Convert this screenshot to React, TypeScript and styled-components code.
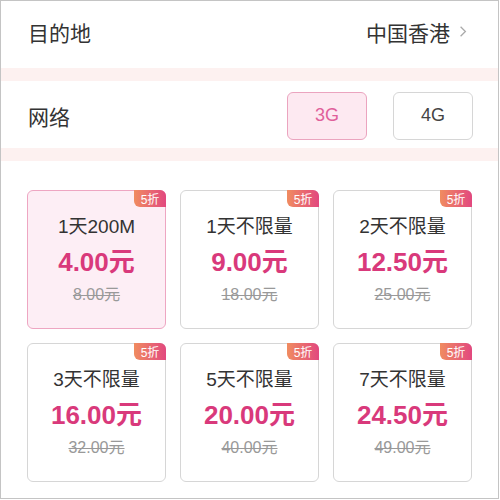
import React from 'react';
import styled, { createGlobalStyle } from 'styled-components';

const GlobalStyle = createGlobalStyle`
  html, body {
    margin: 0;
    padding: 0;
    background: #fff;
  }
  body {
    font-family: "Liberation Sans", "Noto Sans CJK SC", sans-serif;
  }
`;

type Plan = { title: string; price: string; original: string };

const plans: Plan[] = [
  { title: '1天200M', price: '4.00元', original: '8.00元' },
  { title: '1天不限量', price: '9.00元', original: '18.00元' },
  { title: '2天不限量', price: '12.50元', original: '25.00元' },
  { title: '3天不限量', price: '16.00元', original: '32.00元' },
  { title: '5天不限量', price: '20.00元', original: '40.00元' },
  { title: '7天不限量', price: '24.50元', original: '49.00元' },
];

const App: React.FC = () => {
  const [network, setNetwork] = React.useState('3G');
  const [selected, setSelected] = React.useState(0);

  return (
    <Frame>
      <GlobalStyle />
      <Row $lift={6}>
        <Label>目的地</Label>
        <Value>
          中国香港
          <Chevron viewBox="0 0 10 16">
            <path d="M2 2l6 6-6 6" />
          </Chevron>
        </Value>
      </Row>
      <Band />
      <Row $lift={-2}>
        <Label>网络</Label>
        <Options>
          {['3G', '4G'].map(n => (
            <Option key={n} $active={network === n} onClick={() => setNetwork(n)}>
              {n}
            </Option>
          ))}
        </Options>
      </Row>
      <Band />
      <Grid>
        {plans.map((p, i) => (
          <Card key={p.title} $active={selected === i} onClick={() => setSelected(i)}>
            <Badge>5折</Badge>
            <Title>{p.title}</Title>
            <Price>{p.price}</Price>
            <Original>{p.original}</Original>
          </Card>
        ))}
      </Grid>
    </Frame>
  );
};

export default App;

const Frame = styled.div`
  box-sizing: border-box;
  width: 499px;
  height: 499px;
  border: 1px solid #c4c4c4;
  overflow: hidden;
  background: #fff;
`;

const Row = styled.div<{ $lift: number }>`
  box-sizing: border-box;
  display: flex;
  align-items: center;
  justify-content: space-between;
  height: 67px;
  padding: 0 25px 0 27px;
  padding-bottom: ${p => Math.max(p.$lift, 0)}px;
  padding-top: ${p => Math.max(-p.$lift, 0)}px;
`;

const Label = styled.div`
  font-size: 21px;
  color: #333;
`;

const Value = styled.div`
  display: flex;
  align-items: center;
  gap: 9px;
  font-size: 21px;
  color: #333;
  margin-right: 6px;
`;

const Chevron = styled.svg`
  width: 8px;
  height: 13px;
  fill: none;
  stroke: #aaa;
  stroke-width: 1.6;
`;

const Band = styled.div`
  height: 13px;
  background: #fdf1f0;
`;

const Options = styled.div`
  display: flex;
  gap: 26px;
`;

const Option = styled.div<{ $active: boolean }>`
  box-sizing: border-box;
  width: 80px;
  height: 48px;
  display: flex;
  align-items: center;
  justify-content: center;
  border-radius: 6px;
  font-size: 18px;
  cursor: pointer;
  border: 1px solid ${p => (p.$active ? '#eba4bf' : '#d6d6d6')};
  background: ${p => (p.$active ? '#fde9f1' : '#fff')};
  color: ${p => (p.$active ? '#e0609a' : '#444')};
`;

const Grid = styled.div`
  display: grid;
  grid-template-columns: repeat(3, 139px);
  grid-auto-rows: 139px;
  gap: 14px;
  padding: 29px 0 0 26px;
`;

const Card = styled.div<{ $active: boolean }>`
  position: relative;
  box-sizing: border-box;
  display: flex;
  flex-direction: column;
  align-items: center;
  padding-top: 23px;
  border-radius: 6px;
  cursor: pointer;
  border: 1px solid ${p => (p.$active ? '#eea6c2' : '#d6d6d6')};
  background: ${p => (p.$active ? '#fdeef5' : '#fff')};
`;

const Badge = styled.div`
  position: absolute;
  top: -1px;
  right: -1px;
  width: 32px;
  height: 17px;
  display: flex;
  align-items: center;
  justify-content: center;
  font-size: 12px;
  color: #fff;
  border-radius: 0 6px 0 6px;
  background: linear-gradient(90deg, #f08c60, #e2487f);
`;

const Title = styled.div`
  font-size: 19px;
  color: #333;
  line-height: 26px;
`;

const Price = styled.div`
  margin-top: 6px;
  font-size: 26px;
  font-weight: 700;
  color: #d9397b;
  line-height: 32px;
`;

const Original = styled.div`
  margin-top: 6px;
  font-size: 16px;
  color: #999;
  text-decoration: line-through;
  line-height: 22px;
`;
